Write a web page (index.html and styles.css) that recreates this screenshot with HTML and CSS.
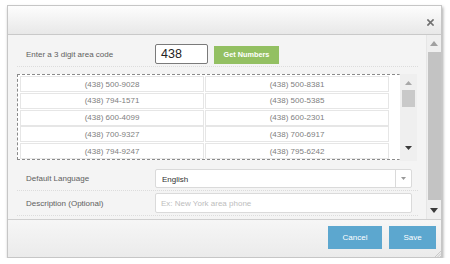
FILE: index.html
```html
<!DOCTYPE html>
<html>
<head>
<meta charset="utf-8">
<link rel="stylesheet" href="styles.css">
</head>
<body>
<div class="dialog">
  <div class="header">
    <svg class="close" width="7" height="7" viewBox="0 0 7 7"><path d="M1 1L6 6M6 1L1 6" stroke="#707070" stroke-width="1.7" stroke-linecap="square"/></svg>
  </div>
  <div class="body">
    <div class="content">
      <div class="row row-area">
        <div class="label">Enter a 3 digit area code</div>
        <div class="code-input">438</div>
        <div class="btn-green">Get Numbers</div>
      </div>
      <div class="list-wrap">
        <div class="list">
          <div class="cell">(438) 500-9028</div><div class="cell">(438) 500-8381</div>
          <div class="cell">(438) 794-1571</div><div class="cell">(438) 500-5385</div>
          <div class="cell">(438) 600-4099</div><div class="cell">(438) 600-2301</div>
          <div class="cell">(438) 700-9327</div><div class="cell">(438) 700-6917</div>
          <div class="cell">(438) 794-9247</div><div class="cell">(438) 795-6242</div>
        </div>
        <div class="mini-scroll">
          <svg class="arr-up" width="7" height="4" viewBox="0 0 7 4"><path d="M0 4L3.5 0L7 4Z" fill="#a8a8a8"/></svg>
          <div class="mini-thumb"></div>
          <svg class="arr-down" width="7" height="4" viewBox="0 0 7 4"><path d="M0 0L7 0L3.5 4Z" fill="#3a3a3a"/></svg>
        </div>
      </div>
      <div class="row row-lang">
        <div class="label">Default Language</div>
        <div class="select">
          <span class="select-text">English</span>
          <span class="select-arrow"><svg width="5" height="3" viewBox="0 0 5 3"><path d="M0 0L5 0L2.5 3Z" fill="#999"/></svg></span>
        </div>
      </div>
      <div class="row row-desc">
        <div class="label">Description (Optional)</div>
        <div class="text-input">Ex: New York area phone</div>
      </div>
    </div>
    <div class="scroll">
      <svg class="arr-up" width="8" height="5" viewBox="0 0 8 5"><path d="M0 5L4 0L8 5Z" fill="#a0a0a0"/></svg>
      <div class="thumb"></div>
      <svg class="arr-down" width="8" height="5" viewBox="0 0 8 5"><path d="M0 0L8 0L4 5Z" fill="#3a3a3a"/></svg>
    </div>
  </div>
  <div class="footer">
    <div class="btn-blue cancel">Cancel</div>
    <div class="btn-blue save">Save</div>
    <svg class="grip" width="6" height="6" viewBox="0 0 6 6"><path d="M6 0L0 6M6 2.5L2.5 6M6 5L5 6" stroke="#c0c0c0" stroke-width="0.8"/></svg>
  </div>
</div>
</body>
</html>
```
FILE: styles.css
```css
* { box-sizing: border-box; }
html, body { margin: 0; padding: 0; background: #ffffff; }
body {
  font-family: "Liberation Sans", Arial, sans-serif;
  font-size: 8px;
  color: #555;
}
.dialog {
  margin: 5px 0 0 7px;
  width: 435px;
  height: 253px;
  border: 1px solid #c6c6c6;
  box-shadow: 1px 2px 3px rgba(0,0,0,0.35);
  display: flex;
  flex-direction: column;
  background: #f4f4f4;
}
.header {
  height: 29px;
  flex: none;
  border-bottom: 1px solid #c9c9c9;
  background: linear-gradient(#fdfdfd, #e8e8e8);
  display: flex;
  justify-content: flex-end;
  align-items: flex-start;
  padding: 13px 7px 0 0;
}
.body {
  height: 184px;
  flex: none;
  display: flex;
  background: #f4f4f4;
}
.content {
  width: 418px;
  padding: 9px 8px 0 9px;
}
.row {
  display: flex;
  align-items: center;
  border-bottom: 1px dotted #dcdcdc;
}
.label {
  width: 138px;
  flex: none;
  padding-left: 9px;
  color: #606060;
}
.row-area { height: 23px; padding-bottom: 2px; }
.code-input {
  width: 53px;
  height: 20px;
  border: 1px solid #7a7a7a;
  border-radius: 2px;
  background: #fff;
  font-size: 12.5px;
  color: #222;
  padding-left: 5px;
  line-height: 18px;
}
.btn-green {
  margin-left: 6px;
  width: 65px;
  height: 18px;
  margin-top: 1px;
  background: #93c062;
  color: #fff;
  font-weight: bold;
  font-size: 7.3px;
  display: flex;
  align-items: center;
  justify-content: center;
}
.list-wrap {
  margin-top: 7px;
  display: flex;
  width: 400px;
}
.list {
  width: 383px;
  height: 86px;
  border: 1px dashed #8a8a8a;
  border-right-color: transparent;
  background: #fff;
  padding: 1px 0 0 2px;
  display: grid;
  grid-template-columns: 184px 184px;
  grid-auto-rows: 16px;
  column-gap: 1px;
  row-gap: 0.75px;
  overflow: hidden;
}
.cell {
  border: 1px solid #e6e6e6;
  background: #fff;
  color: #808080;
  display: flex;
  align-items: center;
  justify-content: center;
}
.mini-scroll {
  width: 17px;
  height: 87px;
  background: #efefef;
  display: flex;
  flex-direction: column;
  align-items: center;
  padding-top: 7px;
}
.mini-thumb {
  width: 13px;
  height: 17px;
  background: #c9c9c9;
  margin-top: 5px;
}
.mini-scroll .arr-down { margin-top: 39px; }
.row-lang { margin-top: 8px; height: 22px; padding-bottom: 2px; }
.select {
  width: 257px;
  height: 19px;
  border: 1px solid #dadada;
  border-radius: 2px;
  background: #fff;
  display: flex;
  align-items: center;
}
.select-text {
  flex: 1;
  padding-left: 6px;
  color: #333;
  padding-top: 2px;
}
.select-arrow {
  width: 16px;
  height: 100%;
  border-left: 1px solid #dadada;
  display: flex;
  align-items: center;
  justify-content: center;
}
.row-desc { height: 25px; padding-top: 2px; padding-bottom: 2px; }
.text-input {
  width: 257px;
  height: 20px;
  border: 1px solid #dadada;
  border-radius: 2px;
  background: #fff;
  color: #bdbdbd;
  padding-left: 5px;
  display: flex;
  align-items: center;
}
.scroll {
  width: 15px;
  background: #efefef;
  display: flex;
  flex-direction: column;
  align-items: center;
  padding-top: 6px;
  border-left: 1px solid #e6e6e6;
}
.thumb {
  width: 13px;
  height: 148px;
  background: #c3c3c3;
  margin-top: 6px;
}
.scroll .arr-down { margin-top: 8px; }
.footer {
  flex: 1;
  border-top: 1px solid #cfcfcf;
  background: linear-gradient(#f6f6f6, #ebebeb);
  display: flex;
  justify-content: flex-end;
  align-items: flex-start;
  padding: 6px 5px 0 0;
  gap: 7px;
  position: relative;
}
.btn-blue {
  height: 23px;
  background: #5ca7cf;
  color: #fff;
  font-size: 8px;
  display: flex;
  align-items: center;
  justify-content: center;
}
.cancel { width: 54px; }
.save { width: 47px; }
.grip { position: absolute; right: 0; bottom: 0; }
```
